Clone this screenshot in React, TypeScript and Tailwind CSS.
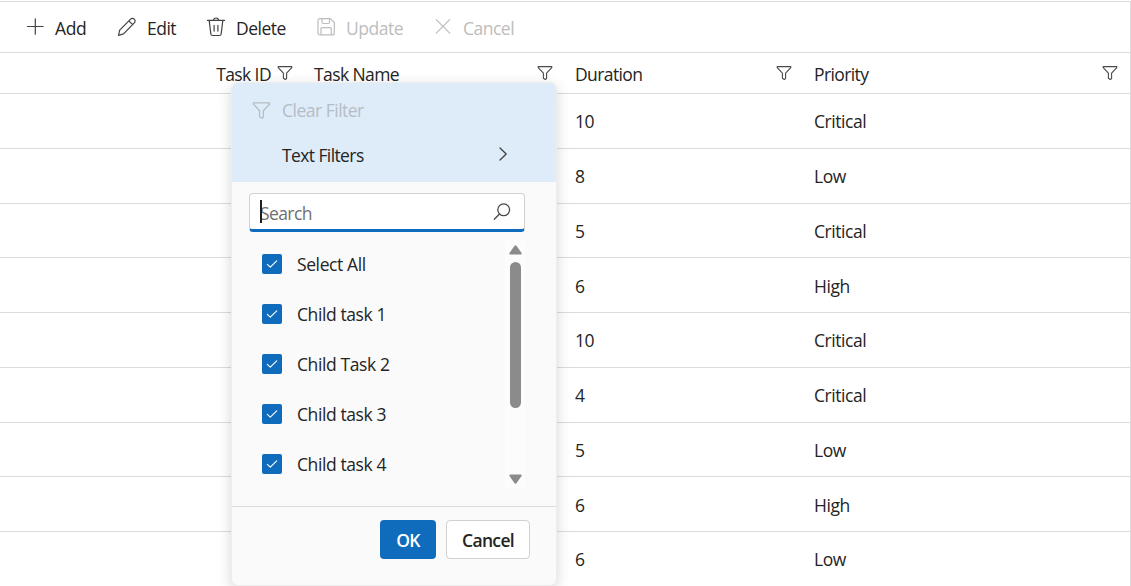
const toolbarItems = [
  { label: 'Add', icon: <AddIcon />, disabled: false, className: 'w-[92px] gap-[10px] tracking-[-0.4px]' },
  { label: 'Edit', icon: <EditIcon />, disabled: false, className: 'w-[89px] gap-[10px] tracking-[-0.5px]' },
  { label: 'Delete', icon: <DeleteIcon />, disabled: false, className: 'w-[110px] gap-[10px] tracking-[-0.5px]' },
  { label: 'Update', icon: <SaveIcon />, disabled: true, className: 'w-[117px] gap-[10px] tracking-[-0.5px]' },
  { label: 'Cancel', icon: <CloseIcon />, disabled: true, className: 'w-[100px] gap-[10px] tracking-[-0.5px]' },
]

const rows = [
  { duration: 10, priority: 'Critical' },
  { duration: 8, priority: 'Low' },
  { duration: 5, priority: 'Critical' },
  { duration: 6, priority: 'High' },
  { duration: 10, priority: 'Critical' },
  { duration: 4, priority: 'Critical' },
  { duration: 5, priority: 'Low' },
  { duration: 6, priority: 'High' },
  { duration: 6, priority: 'Low' },
]

const filterOptions = ['Select All', 'Child task 1', 'Child Task 2', 'Child task 3', 'Child task 4']

function AddIcon() {
  return (
    <svg width="20" height="20" viewBox="0 0 20 20" fill="none" stroke="currentColor" strokeWidth="1.2" strokeLinecap="round">
      <path d="M10.3 1.8v15.4M2.5 9.5h15.6" />
    </svg>
  )
}

function EditIcon() {
  return (
    <svg width="20" height="20" viewBox="0 0 20 20" fill="none" stroke="currentColor" strokeWidth="1.2" strokeLinejoin="round">
      <path d="M1.5 18.3l1.2-5.2L13.6 2.1a2.55 2.55 0 0 1 3.7 0a2.55 2.55 0 0 1 0 3.7L6.5 16.9zM11.9 3.9l3.7 3.7" />
    </svg>
  )
}

function DeleteIcon() {
  return (
    <svg width="20" height="20" viewBox="0 0 20 20" fill="none" stroke="currentColor" strokeWidth="1.2" strokeLinecap="round" strokeLinejoin="round">
      <path d="M1.5 3.4h17M7.5 3.2a2.5 2.2 0 0 1 5 0M3.2 3.6l1.6 13.1a2 2 0 0 0 2 1.8h6.4a2 2 0 0 0 2-1.8l1.6-13.1M8.1 8.3v5.8M11.9 8.3v5.8" />
    </svg>
  )
}

function SaveIcon() {
  return (
    <svg width="20" height="20" viewBox="0 0 20 20" fill="none" stroke="currentColor" strokeWidth="1.2" strokeLinejoin="round">
      <path d="M4 1.6h10.3l4 3.9v10.4a2 2 0 0 1-2 2H4a2 2 0 0 1-2-2V3.6a2 2 0 0 1 2-2z" />
      <path d="M6 1.8v3.5a1.2 1.2 0 0 0 1.2 1.2h5.1a1.2 1.2 0 0 0 1.2-1.2V1.8M5 17.8v-6a1.2 1.2 0 0 1 1.2-1.2h7.9a1.2 1.2 0 0 1 1.2 1.2v6" />
    </svg>
  )
}

function CloseIcon() {
  return (
    <svg width="20" height="20" viewBox="0 0 20 20" fill="none" stroke="currentColor" strokeWidth="1.2" strokeLinecap="round">
      <path d="M3.3 2.6l13.4 13.6M16.7 2.6L3.3 16.2" />
    </svg>
  )
}

function FilterIcon({ size = 16 }: { size?: number }) {
  return (
    <svg width={size} height={size} viewBox="0 0 16 16" fill="none" stroke="currentColor" strokeWidth="1.1" strokeLinejoin="round" className="shrink-0">
      <path d="M1.2 1.6h13.6v1L9.6 8.2v5.4l-1.3.9-1.9-1.3V8.2L1.2 2.6z" />
    </svg>
  )
}

function HeaderCell({ label, right }: { label: string; right?: boolean }) {
  return (
    <div className={right ? 'flex items-center justify-end gap-[6px] pr-[10px]' : 'flex items-center justify-between pr-[11px] pl-[11px]'}>
      <span className="pt-px">{label}</span>
      <span className="text-[#4a4a4a]">
        <FilterIcon />
      </span>
    </div>
  )
}

function FilterMenu() {
  return (
    <div className="absolute top-[82px] left-[231px] flex h-[504px] w-[326px] flex-col overflow-hidden rounded-[7px] border border-[#ededed] bg-[#fafafa] shadow-[0_4px_14px_rgba(0,0,0,0.16)]">
      {/* menu items */}
      <div className="h-[99px] shrink-0 bg-[#deecf9] pt-[5px]">
        <div className="flex h-[45px] items-center gap-[11px] pl-[20px] tracking-[-0.5px] text-[#b5bcc4]">
          <FilterIcon size={19} />
          <span className="pb-[2px]">Clear Filter</span>
        </div>
        <div className="flex h-[45px] items-center justify-between pr-[47px] pl-[50px]">
          <span className="pb-[2px]">Text Filters</span>
          <svg width="12" height="16" viewBox="0 0 12 16" fill="none" stroke="#424242" strokeWidth="1.3" strokeLinecap="round" strokeLinejoin="round" className="mb-[3px]">
            <path d="M3 2l6.2 6L3 14" />
          </svg>
        </div>
      </div>

      {/* search box */}
      <div className="mt-[11px] ml-[17px] flex h-[39px] w-[276px] shrink-0 items-center justify-between rounded-[4px] border border-b-[3px] border-[#d1d1d1] border-b-[#0f6cbd] bg-white pr-[12px] pl-[10px]">
        <div className="relative pt-[3px] text-[#707070]">
          <span>Search</span>
          <span className="absolute top-[2px] left-0 h-[23px] w-[2px] bg-[#1f1f1f]" />
        </div>
        <svg width="20" height="20" viewBox="0 0 20 20" fill="none" stroke="#4a4a4a" strokeWidth="1.3" strokeLinecap="round">
          <circle cx="11.7" cy="7.8" r="5.9" />
          <path d="M7.3 12.2l-5 5" />
        </svg>
      </div>

      {/* checkbox list */}
      <div className="mt-[7px] ml-[30px] flex h-[255px] w-[263px] shrink-0 justify-between tracking-[-0.4px]">
        <div>
          {filterOptions.map((option) => (
            <div key={option} className="flex h-[50px] items-center gap-[15px]">
              <span className="flex size-[20px] items-center justify-center rounded-[2px] bg-[#0f6cbd]">
                <svg width="12" height="10" viewBox="0 0 12 10" fill="none" stroke="#fff" strokeWidth="1.1" strokeLinecap="round" strokeLinejoin="round" className="mb-px">
                  <path d="M1.3 5.4l3 2.8 6.4-6.4" />
                </svg>
              </span>
              <span>{option}</span>
            </div>
          ))}
        </div>
        <div className="flex h-[250px] w-[20px] flex-col items-center bg-[#fcfcfc] pt-[6px] pb-[5px]">
          <svg width="13" height="10" viewBox="0 0 13 10" fill="#8b8b8b" className="shrink-0">
            <path d="M5.6.8a1.2 1.2 0 0 1 1.8 0l5 7a1 1 0 0 1-.8 1.7H1.4a1 1 0 0 1-.8-1.7z" />
          </svg>
          <div className="mt-[7px] h-[146px] w-[11px] rounded-full bg-[#8b8b8b]" />
          <svg width="13" height="10" viewBox="0 0 13 10" fill="#8b8b8b" className="mt-auto shrink-0">
            <path d="M5.6 9.2a1.2 1.2 0 0 0 1.8 0l5-7a1 1 0 0 0-.8-1.7H1.4a1 1 0 0 0-.8 1.7z" />
          </svg>
        </div>
      </div>

      {/* footer */}
      <div className="mt-[12px] flex flex-1 items-start justify-end gap-[10px] border-t border-[#dcdcdc] pt-[13px] pr-[26px] font-semibold tracking-[-0.65px]">
        <button className="h-[39px] w-[56px] rounded-[4px] bg-[#0f6cbd] text-white">OK</button>
        <button className="h-[39px] w-[84px] rounded-[4px] border border-[#d1d1d1] bg-white text-[#242424]">Cancel</button>
      </div>
    </div>
  )
}

export default function App() {
  return (
    <div className="relative h-[586px] w-[1131px] overflow-hidden bg-white pt-px font-['Open_Sans','Noto_Sans',sans-serif] text-[17.5px] leading-[24px] tracking-[-0.6px] text-[#242424]">
      <div className="h-[585px] overflow-hidden border-t border-r border-[#dcdcdc]">
        {/* toolbar */}
        <div className="flex h-[51px] items-center border-b border-[#dcdcdc] pl-[25px]">
          {toolbarItems.map((item) => (
            <button
              key={item.label}
              className={`flex shrink-0 items-center ${item.className} ${item.disabled ? 'text-[#bdbdbd]' : ''}`}
            >
              <span className={item.disabled ? '' : 'text-[#424242]'}>{item.icon}</span>
              <span className="pt-[2px]">{item.label}</span>
            </button>
          ))}
        </div>

        {/* header */}
        <div className="grid h-[41px] grid-cols-[303px_261px_239px_326px] border-b border-[#dcdcdc]">
          <HeaderCell label="Task ID" right />
          <HeaderCell label="Task Name" />
          <HeaderCell label="Duration" />
          <HeaderCell label="Priority" />
        </div>

        {rows.map((row, i) => (
          <div key={i} className="grid h-[54.75px] grid-cols-[303px_261px_239px_1fr] items-center border-b border-[#dcdcdc]">
            <span />
            <span />
            <span className="pt-px pl-[11px]">{row.duration}</span>
            <span className="pt-px pl-[11px] tracking-[-0.45px]">{row.priority}</span>
          </div>
        ))}
      </div>

      <FilterMenu />
    </div>
  )
}
